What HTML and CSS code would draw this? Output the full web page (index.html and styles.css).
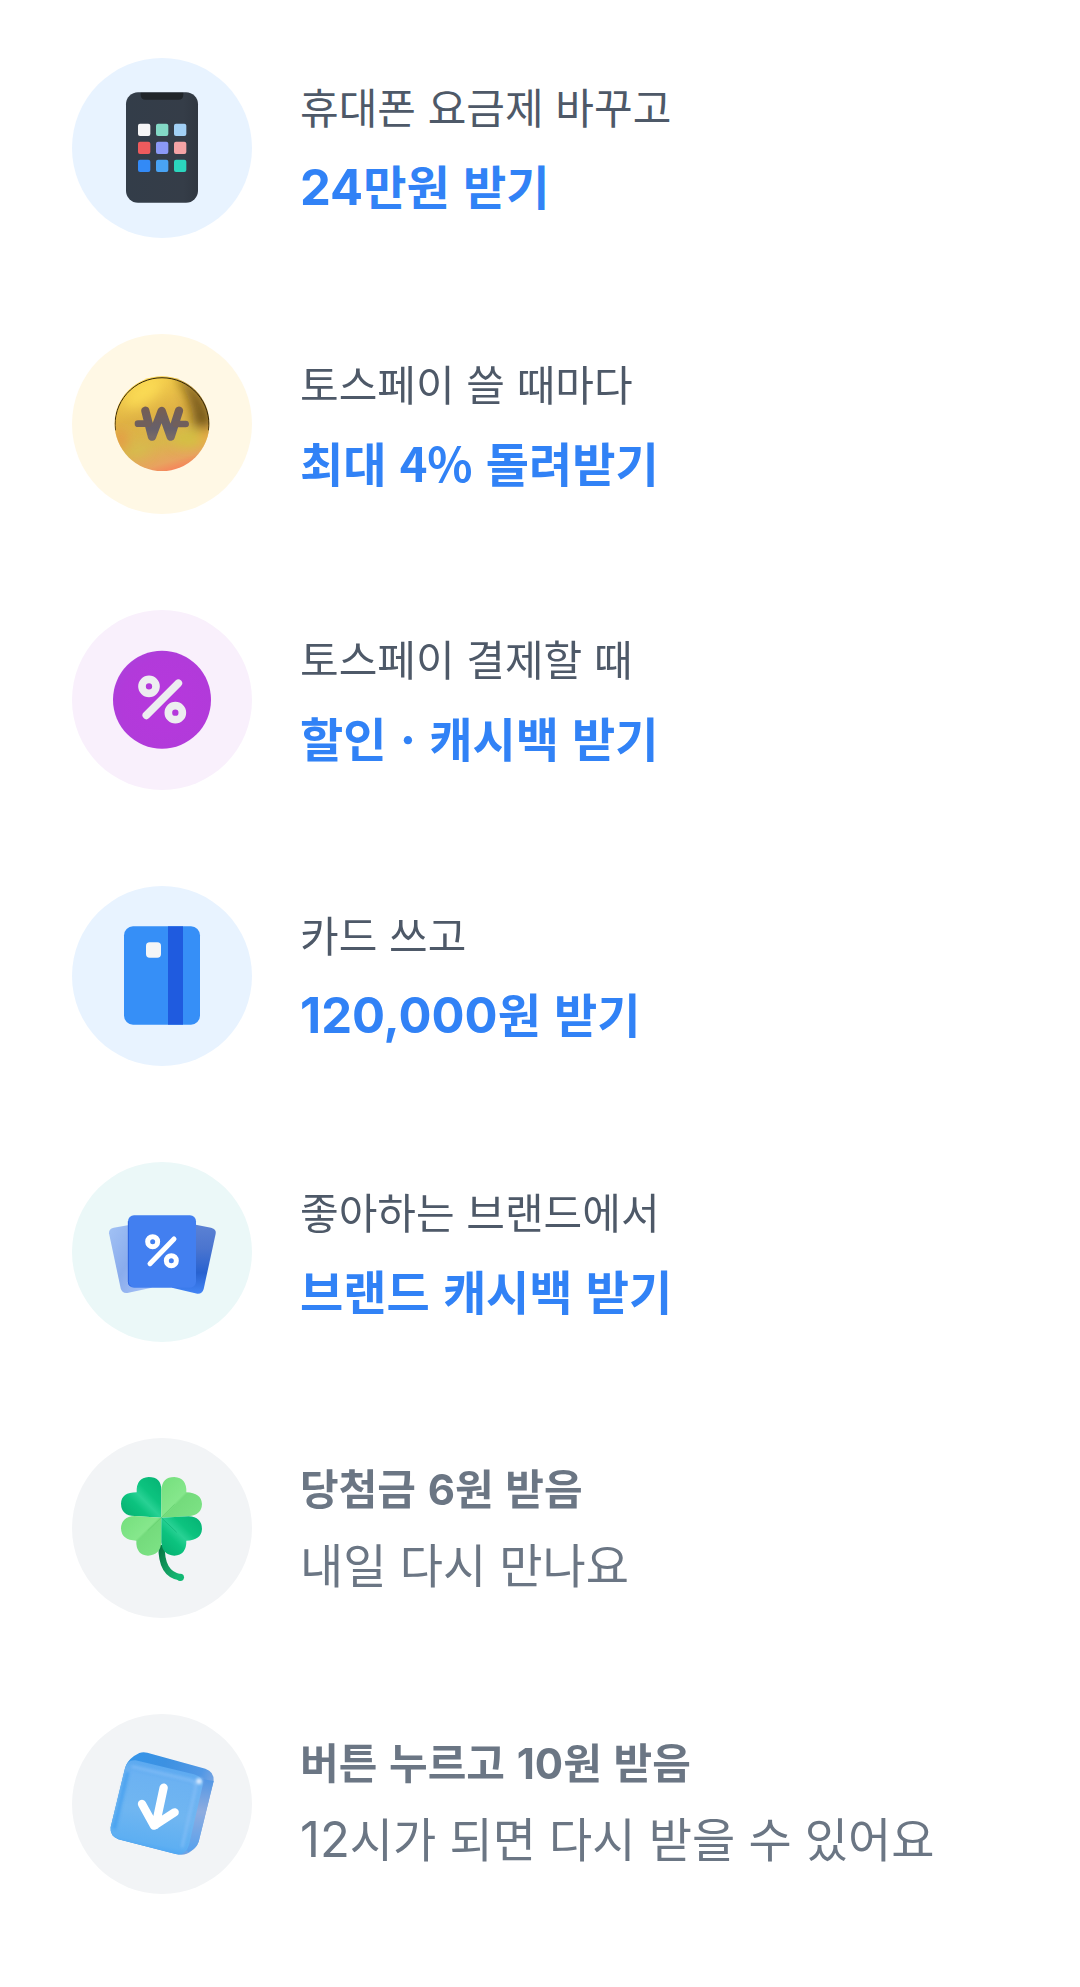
FILE: index.html
```html
<!DOCTYPE html>
<html lang="ko">
<head>
<meta charset="utf-8">
<meta name="viewport" content="width=device-width, initial-scale=1">
<title>혜택</title>
<link rel="stylesheet" href="styles.css">
</head>
<body>
<main>
<ul class="benefits">
  <li>
    <a class="benefit" href="#phone-plan">
      <svg class="icon icon-blue" viewBox="36 39 540 540" aria-hidden="true">
        <defs>
          <linearGradient id="phone" x1="0" y1="0" x2="1" y2="0"><stop offset="0" stop-color="#333d49"/><stop offset=".8" stop-color="#353d48"/><stop offset="1" stop-color="#303741"/></linearGradient>
        </defs>
        <rect x="198" y="142" width="216" height="331" rx="36" fill="url(#phone)"/>
        <path d="M242 143h128v6q0 15-15 15h-98q-15 0-15-15z" fill="#20252a"/>
        <rect x="234" y="236" width="37" height="37" rx="6" fill="#f5f5f6"/>
        <rect x="288" y="236" width="37" height="37" rx="6" fill="#83d9c6"/>
        <rect x="342" y="236" width="37" height="37" rx="6" fill="#a2d0f5"/>
        <rect x="234" y="290" width="37" height="37" rx="6" fill="#ee5b5d"/>
        <rect x="288" y="290" width="37" height="37" rx="6" fill="#8b99f6"/>
        <rect x="342" y="290" width="37" height="37" rx="6" fill="#f4a3a5"/>
        <rect x="234" y="344" width="37" height="37" rx="6" fill="#338af6"/>
        <rect x="288" y="344" width="37" height="37" rx="6" fill="#49a3f4"/>
        <rect x="342" y="344" width="37" height="37" rx="6" fill="#2bd6be"/>
      </svg>
      <span class="copy">
        <span class="small">휴대폰 요금제 바꾸고</span>
        <strong class="large accent"><span class="num">24</span>만원 받기</strong>
      </span>
    </a>
  </li>
  <li>
    <a class="benefit" href="#toss-pay">
      <svg class="icon icon-yellow" viewBox="36 27 540 540" aria-hidden="true">
        <defs>
          <linearGradient id="gold" x1=".3" y1="0" x2=".6" y2="1"><stop offset="0" stop-color="#f9d34d"/><stop offset=".4" stop-color="#dfb245"/><stop offset=".7" stop-color="#d9b64d"/><stop offset=".9" stop-color="#e8a35f"/><stop offset="1" stop-color="#f6845b"/></linearGradient>
          <linearGradient id="won" x1="0" y1="0" x2="0" y2="1"><stop offset="0" stop-color="#735e56"/><stop offset=".7" stop-color="#67606a"/><stop offset="1" stop-color="#766968"/></linearGradient>
          <clipPath id="coin"><circle cx="306" cy="296" r="142"/></clipPath>
          <filter id="blur" x="-60%" y="-60%" width="220%" height="220%"><feGaussianBlur stdDeviation="18"/></filter>
        </defs>
        <circle cx="306" cy="296" r="142" fill="url(#gold)"/>
        <g clip-path="url(#coin)">
          <g filter="url(#blur)">
            <path d="M342 146q90 30 120 164l-60 0q0-90-60-164z" fill="#604713" opacity=".85"/>
            <ellipse cx="250" cy="205" rx="65" ry="30" fill="#ffe258" opacity=".7" transform="rotate(-35 250 205)"/>
            <ellipse cx="182" cy="345" rx="18" ry="32" fill="#e98c43" opacity=".7"/>
            <ellipse cx="385" cy="345" rx="46" ry="24" fill="#d1c43f" opacity=".8"/>
            <ellipse cx="440" cy="335" rx="14" ry="26" fill="#f0a943"/>
            <ellipse cx="235" cy="375" rx="30" ry="20" fill="#d5bf4e" opacity=".7"/>
          </g>
          <path d="M166 316A141 141 0 1 1 446 316" fill="none" stroke="#33270d" stroke-width="3"/>
        </g>
        <g fill="none" stroke="url(#won)" stroke-linecap="round" stroke-linejoin="round">
          <path d="M256 257L276 335L305 258L332 335L357 257" stroke-width="25"/>
          <path d="M234 296h30M348 297h29" stroke-width="20" stroke="#705f5c"/>
        </g>
      </svg>
      <span class="copy">
        <span class="small">토스페이 쓸 때마다</span>
        <strong class="large accent">최대 4% 돌려받기</strong>
      </span>
    </a>
  </li>
  <li>
    <a class="benefit" href="#discount">
      <svg class="icon icon-purple" viewBox="36 30 540 540" aria-hidden="true">
        <defs>
          <radialGradient id="violet" cx=".54" cy=".53" r=".57"><stop offset="0" stop-color="#b638dd"/><stop offset=".8" stop-color="#b23ada"/><stop offset=".94" stop-color="#ae3dda"/><stop offset="1" stop-color="#b84be2"/></radialGradient>
        </defs>
        <circle cx="306" cy="299" r="147" fill="url(#violet)"/>
        <g fill="none" stroke="#ededf0">
          <circle cx="267" cy="259" r="21" stroke-width="23"/>
          <circle cx="346" cy="338" r="21" stroke-width="23"/>
          <path d="M259 346L355 250" stroke-width="23" stroke-linecap="round"/>
        </g>
      </svg>
      <span class="copy">
        <span class="small">토스페이 결제할 때</span>
        <strong class="large accent">할인 <span class="num">·</span> 캐시백 받기</strong>
      </span>
    </a>
  </li>
  <li>
    <a class="benefit" href="#card">
      <svg class="icon icon-blue" viewBox="36 33 540 540" aria-hidden="true">
        <rect x="192" y="154" width="228" height="295" rx="27" fill="#368ff7"/>
        <rect x="324" y="154" width="45" height="295" fill="#1f5bdf"/>
        <rect x="258" y="202" width="45" height="46" rx="11" fill="#f5f6f7"/>
      </svg>
      <span class="copy">
        <span class="small">카드 쓰고</span>
        <strong class="large accent"><span class="num">120,000</span>원 받기</strong>
      </span>
    </a>
  </li>
  <li>
    <a class="benefit" href="#brand">
      <svg class="icon icon-mint" viewBox="36 36 540 540" aria-hidden="true">
        <defs>
          <linearGradient id="left-card" x1="0" y1="0" x2="1" y2="1"><stop offset="0" stop-color="#a2c2f5"/><stop offset=".5" stop-color="#8aacec"/><stop offset="1" stop-color="#a9c4f8"/></linearGradient>
          <linearGradient id="right-card" x1="0" y1="0" x2="0" y2="1"><stop offset="0" stop-color="#5c82d4"/><stop offset=".35" stop-color="#4b75cf"/><stop offset=".7" stop-color="#2862d0"/><stop offset="1" stop-color="#4284f5"/></linearGradient>
        </defs>
        <path d="M161 233L220 223L275 413L202 429Q186 431 182 415L147 250Q146 236 161 233z" fill="url(#left-card)"/>
        <path d="M396 222L453 233Q470 237 467 251L431 417Q427 432 412 431L336 413z" fill="url(#right-card)"/>
        <rect x="204" y="196" width="204" height="217" rx="18" fill="#427ff0"/>
        <path d="M205 214v181q0 10 7 14" fill="none" stroke="#2861df" stroke-width="3"/>
        <g fill="none" stroke="#fff">
          <circle cx="278" cy="275" r="15" stroke-width="15"/>
          <circle cx="334" cy="332" r="15" stroke-width="15"/>
          <path d="M270 341L342 267" stroke-width="15" stroke-linecap="round"/>
        </g>
      </svg>
      <span class="copy">
        <span class="small">좋아하는 브랜드에서</span>
        <strong class="large accent">브랜드 캐시백 받기</strong>
      </span>
    </a>
  </li>
  <li>
    <a class="benefit done" href="#lottery">
      <svg class="icon icon-gray" viewBox="36 39 540 540" aria-hidden="true">
        <defs>
          <linearGradient id="leaf-dark" x1="0" y1="1" x2="1" y2="0"><stop offset="0" stop-color="#05ad6e"/><stop offset=".35" stop-color="#0cc37f"/><stop offset=".5" stop-color="#28d194"/><stop offset=".65" stop-color="#0cc37f"/><stop offset="1" stop-color="#05b273"/></linearGradient>
          <linearGradient id="leaf-light" x1="0" y1="0" x2="1" y2="1"><stop offset="0" stop-color="#74df7d"/><stop offset=".48" stop-color="#86e78c"/><stop offset=".52" stop-color="#74db7c"/><stop offset="1" stop-color="#7ee386"/></linearGradient>
          <linearGradient id="stem" x1="0" y1="0" x2="1" y2="1"><stop offset="0" stop-color="#057642"/><stop offset=".5" stop-color="#139b5f"/><stop offset="1" stop-color="#14bd77"/></linearGradient>
        </defs>
        <path d="M305 360Q302 448 361 457" fill="none" stroke="url(#stem)" stroke-width="19"/>
        <circle cx="361" cy="457" r="11" fill="#12b873"/>
        <path d="M304 278V195Q304 156 266 156Q228 158 230 202Q184 202 183 236Q184 272 224 273Z" fill="url(#leaf-dark)"/>
        <path d="M304 278V195Q306 156 343 156Q381 159 379 202Q424 204 426 237Q425 270 386 274Z" fill="url(#leaf-light)"/>
        <path d="M304 278V352Q301 391 264 392Q227 389 229 347Q184 346 183 310Q184 275 224 273Z" fill="url(#leaf-light)"/>
        <path d="M304 278V352Q307 391 343 392Q380 389 379 347Q424 346 426 312Q425 276 386 274Z" fill="url(#leaf-dark)"/>
        <path d="M304 278L263 317M304 278L344 238" stroke="#64ce6e" stroke-width="3" opacity=".6"/>
        <path d="M304 278L350 322" stroke="#05aa6c" stroke-width="3" opacity=".5"/>
      </svg>
      <span class="copy">
        <strong class="small">당첨금 <span class="num">6</span>원 받음</strong>
        <span class="large">내일 다시 만나요</span>
      </span>
    </a>
  </li>
  <li>
    <a class="benefit done" href="#button">
      <svg class="icon icon-gray" viewBox="36 27 540 540" aria-hidden="true">
        <defs>
          <linearGradient id="cube" x1="0" y1="0" x2="1" y2=".35"><stop offset="0" stop-color="#3197ed"/><stop offset=".5" stop-color="#3c91e2"/><stop offset=".85" stop-color="#5298e5"/><stop offset="1" stop-color="#7ea7e2"/></linearGradient>
          <linearGradient id="face" x1=".3" y1="0" x2=".1" y2="1"><stop offset="0" stop-color="#5ba9f0"/><stop offset=".15" stop-color="#6cb2f2"/><stop offset=".5" stop-color="#70b6f1"/><stop offset=".82" stop-color="#5eaff2"/><stop offset="1" stop-color="#379bf4"/></linearGradient>
          <linearGradient id="side" x1="0" y1="0" x2="0" y2="1"><stop offset="0" stop-color="#5297e5"/><stop offset=".45" stop-color="#8facdf"/><stop offset="1" stop-color="#55a1ee"/></linearGradient>
          <filter id="soft" x="-50%" y="-50%" width="200%" height="200%"><feGaussianBlur stdDeviation="5"/></filter>
        </defs>
        <path d="M238 144Q248 140 262 143L436 191Q463 200 461 228L416 410Q410 428 395 437Q376 454 347 447L175 403Q149 393 152 367L195 190Q200 169 222 153z" fill="url(#cube)"/>
        <path d="M426 222L461 228L416 410Q410 428 385 442L372 430z" fill="url(#side)"/>
        <path d="M227 166L402 208Q434 218 427 246L387 420Q376 454 347 447L175 403Q149 393 152 367L195 190Q202 163 227 166z" fill="url(#face)"/>
        <path d="M203 200L162 372" fill="none" stroke="#3d9cef" stroke-width="12" opacity=".7" filter="url(#soft)"/>
        <path d="M215 184L388 225Q413 229 405 257L366 427" fill="none" stroke="#91c4fa" stroke-width="7" opacity=".65" filter="url(#soft)"/>
        <circle cx="417" cy="229" r="9" fill="#dcebff" filter="url(#soft)"/>
        <path d="M311 248L287 360M246 297L282 362L344 322" fill="none" stroke="#fff" stroke-width="25" stroke-linecap="round" stroke-linejoin="round"/>
      </svg>
      <span class="copy">
        <strong class="small">버튼 누르고 <span class="num">10</span>원 받음</strong>
        <span class="large"><span class="num">12</span>시가 되면 다시 받을 수 있어요</span>
      </span>
    </a>
  </li>
</ul>
</main>
</body>
</html>
```
FILE: styles.css
```css
* {
  box-sizing: border-box;
}

body {
  margin: 0;
  background: #fff;
  color: #4e5968;
  font-family: "Noto Sans CJK KR", sans-serif;
}

.benefits {
  display: grid;
  gap: 96px;
  margin: 0;
  padding: 58px 72px 94px;
  list-style: none;
}

.benefit {
  display: flex;
  align-items: center;
  gap: 48px;
  color: inherit;
  text-decoration: none;
}

.icon {
  flex: none;
  width: 180px;
  height: 180px;
  border-radius: 50%;
}

.icon-blue { background: #e8f3ff; }
.icon-yellow { background: #fff8e5; }
.icon-purple { background: #f9f0fc; }
.icon-mint { background: #ebf8f8; }
.icon-gray { background: #f2f4f6; }

.copy {
  display: flex;
  flex-direction: column;
  gap: 12px;
  min-width: 0;
}

.small {
  font-size: 42px;
  line-height: 64px;
}

.large {
  font-size: 47px;
  line-height: 70px;
}

.num {
  font-family: Inter, "Noto Sans CJK KR", sans-serif;
}

.large .num {
  font-size: 49px;
}

.accent { color: #3182f6; }
.benefit.done { color: #6b7684; }

.done .copy {
  gap: 6px;
  padding-bottom: 4px;
}
```
